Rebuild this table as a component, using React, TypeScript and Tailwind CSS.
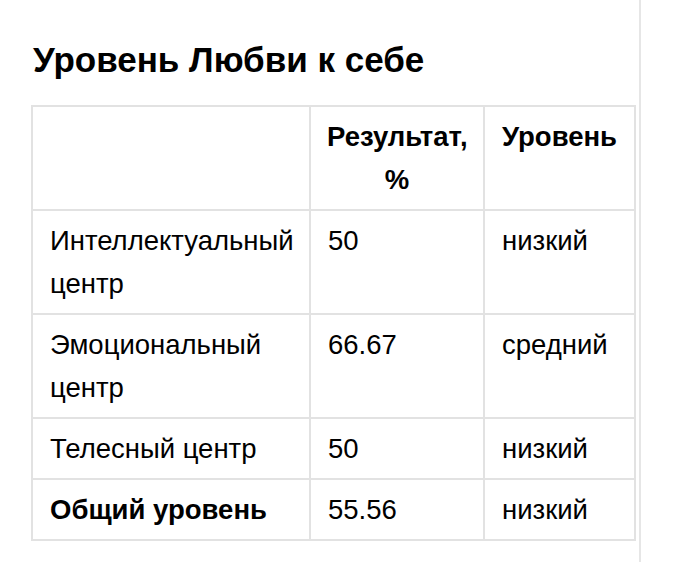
const rows = [
  { name: "Интеллектуальный центр", value: "50", level: "низкий" },
  { name: "Эмоциональный центр", value: "66.67", level: "средний" },
  { name: "Телесный центр", value: "50", level: "низкий" },
  { name: "Общий уровень", value: "55.56", level: "низкий", bold: true },
];

export default function App() {
  return (
    <div className="h-[562px] w-full bg-white font-['Liberation_Sans',Arial,sans-serif] text-black">
      <div className="h-full w-[641px] border-r-2 border-[#e6e6e6] pl-[31px] pt-[40px]">
        <h2 className="text-[35px] font-bold leading-[40px] pl-[2px]">
          Уровень Любви к себе
        </h2>
        <table className="mt-[25px] w-[603px] table-fixed border-collapse text-[27.5px] leading-[43px]">
          <colgroup>
            <col className="w-[278px]" />
            <col className="w-[174px]" />
            <col className="w-[151px]" />
          </colgroup>
          <thead>
            <tr>
              <th className="border-2 border-[#e2e2e2] px-[18px] py-[8px]" />
              <th className="border-2 border-[#e2e2e2] px-[16px] py-[8px] align-top text-center font-bold">
                Результат, %
              </th>
              <th className="border-2 border-[#e2e2e2] px-[16px] py-[8px] align-top text-center font-bold">
                Уровень
              </th>
            </tr>
          </thead>
          <tbody>
            {rows.map((r) => (
              <tr key={r.name}>
                <td
                  className={`border-2 border-[#e2e2e2] pl-[17px] pr-[12px] py-[8px] align-top ${
                    r.bold ? "font-bold" : ""
                  }`}
                >
                  {r.name}
                </td>
                <td className="border-2 border-[#e2e2e2] px-[17px] py-[8px] align-top">
                  {r.value}
                </td>
                <td className="border-2 border-[#e2e2e2] px-[17px] py-[8px] align-top">
                  {r.level}
                </td>
              </tr>
            ))}
          </tbody>
        </table>
      </div>
    </div>
  );
}
